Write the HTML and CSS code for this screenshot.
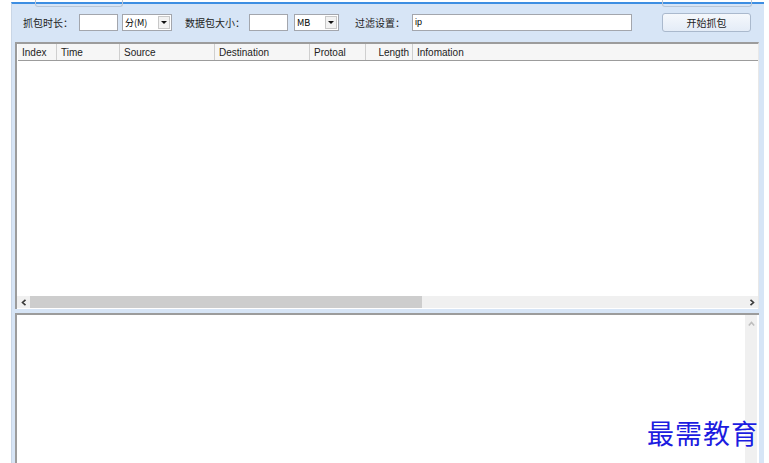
FILE: index.html
```html
<!DOCTYPE html>
<html lang="zh-CN">
<head>
  <meta charset="UTF-8">
  <title>抓包工具</title>
  <link rel="stylesheet" href="styles.css">
</head>
<body>

  <div class="window">
    <div class="tab-edge"></div>
    <div class="btn-edge"></div>

    <div class="toolbar">
      <span class="label lbl-time">抓包时长：</span>
      <div class="input w-time"></div>
      <div class="select w-unit">
        <span>分(M)</span>
        <i class="drop"></i>
      </div>
      <span class="label lbl-size">数据包大小：</span>
      <div class="input w-size"></div>
      <div class="select w-mb">
        <span>MB</span>
        <i class="drop"></i>
      </div>
      <span class="label lbl-filter">过滤设置：</span>
      <div class="input w-filter">ip</div>
      <button class="start">开始抓包</button>
    </div>

    <div class="list">
      <div class="head">
        <div class="col c-index">Index</div>
        <div class="col c-time">Time</div>
        <div class="col c-src">Source</div>
        <div class="col c-dst">Destination</div>
        <div class="col c-proto">Protoal</div>
        <div class="col c-len">Length</div>
        <div class="col c-info">Infomation</div>
      </div>
      <div class="rows"></div>
      <div class="hscroll">
        <span class="arrow">
          <svg width="6" height="7" viewBox="0 0 6 7"><path d="M4.5 0.8 L1.5 3.5 L4.5 6.2" fill="none" stroke="#3a3a3a" stroke-width="1.6"/></svg>
        </span>
        <div class="track"><div class="thumb"></div></div>
        <span class="arrow">
          <svg width="6" height="7" viewBox="0 0 6 7"><path d="M1.5 0.8 L4.5 3.5 L1.5 6.2" fill="none" stroke="#3a3a3a" stroke-width="1.6"/></svg>
        </span>
      </div>
    </div>

    <div class="detail">
      <div class="text"></div>
      <div class="vscroll">
        <svg class="up" width="7" height="6" viewBox="0 0 7 6"><path d="M0.8 4.5 L3.5 1.5 L6.2 4.5" fill="none" stroke="#bdbdbd" stroke-width="1.6"/></svg>
      </div>
    </div>
  </div>

  <div class="watermark">最需教育</div>

</body>
</html>
```

FILE: styles.css
```css
body {
  margin: 0;
  background: #fff;
  font-family: "Liberation Sans", "Noto Sans CJK SC", sans-serif;
  font-size: 10px;
  color: #000;
  height: 463px;
  overflow: hidden;
  position: relative;
}
.window {
  margin: 2px 0 0 11px;
  width: 753px;
  height: 461px;
  background: #d7e5f6;
  border-top: 2px solid #3d8ee2;
  border-left: 1px solid #c9d6e6;
  box-sizing: border-box;
  display: flex;
  flex-direction: column;
  position: relative;
}
.tab-edge {
  position: absolute;
  left: 23px;
  top: -4px;
  width: 86px;
  height: 6px;
  border: 1px solid #b9c6d6;
  border-top: none;
  border-radius: 0 0 3px 3px;
}
.btn-edge {
  position: absolute;
  left: 650px;
  top: -4px;
  width: 88px;
  height: 6px;
  border: 1px solid #b9c6d6;
  border-top: none;
  border-radius: 0 0 3px 3px;
}
.toolbar {
  display: flex;
  align-items: center;
  height: 19px;
  margin-top: 9px;
  padding-left: 11px;
}
.label {
  font-family: "Noto Sans CJK SC", sans-serif;
  font-size: 10px;
  color: #222;
  white-space: nowrap;
}
.lbl-time { width: 56px; }
.lbl-size { width: 64px; margin-left: 13px; }
.lbl-filter { width: 57px; margin-left: 16px; }
.input {
  height: 17px;
  background: #fff;
  border: 1px solid #a3a6ad;
  box-sizing: border-box;
  font-size: 9px;
  line-height: 15px;
  padding-left: 2px;
}
.w-time { width: 39px; }
.w-size { width: 39px; }
.w-filter { width: 220px; }
.select {
  height: 17px;
  background: #fff;
  border: 1px solid #a3a6ad;
  box-sizing: border-box;
  display: flex;
  align-items: center;
  justify-content: space-between;
  font-family: "Noto Sans CJK SC", sans-serif;
  font-size: 9px;
  padding-left: 2px;
}
.w-unit { width: 50px; margin-left: 4px; }
.w-mb { width: 45px; margin-left: 6px; }
.drop {
  width: 12px;
  height: 13px;
  margin-right: 1px;
  border: 1px solid #c8c8c8;
  box-sizing: border-box;
  background: #f2f2f2;
  position: relative;
}
.drop::after {
  content: "";
  position: absolute;
  left: 2px;
  top: 4px;
  border-left: 3px solid transparent;
  border-right: 3px solid transparent;
  border-top: 3px solid #111;
}
.start {
  width: 89px;
  height: 19px;
  margin-left: 30px;
  border: 1px solid #aab9cd;
  border-radius: 3px;
  background: linear-gradient(#f5f8fc, #e4ecf7);
  font-family: "Noto Sans CJK SC", sans-serif;
  font-size: 10px;
  color: #222;
  padding: 0;
}
.list {
  margin: 10px 0 0 3px;
  width: 744px;
  height: 267px;
  background: #fff;
  border-top: 2px solid #9c9c9c;
  border-left: 2px solid #9c9c9c;
  border-right: 1px solid #e8e8e8;
  box-sizing: border-box;
  display: flex;
  flex-direction: column;
}
.head {
  display: flex;
  height: 17px;
  margin-left: 1px;
  background: #f6f6f6;
  border-bottom: 1px solid #9c9c9c;
  box-sizing: border-box;
}
.col {
  line-height: 16px;
  padding: 1px 0 0 4px;
  border-right: 1px solid #cfcfcf;
  box-sizing: border-box;
  color: #222;
  white-space: nowrap;
}
.c-index { width: 39px; }
.c-time { width: 63px; }
.c-src { width: 95px; }
.c-dst { width: 95px; }
.c-proto { width: 56px; }
.c-len { width: 47px; text-align: right; padding-right: 3px; }
.c-info { flex: 1; border-right: none; }
.rows {
  flex: 1;
}
.hscroll {
  display: flex;
  align-items: center;
  height: 12px;
  background: #f0f0f0;
  margin-bottom: 1px;
}
.hscroll .arrow {
  width: 13px;
  height: 12px;
  display: flex;
  align-items: center;
  justify-content: center;
}
.track {
  flex: 1;
  height: 12px;
}
.thumb {
  width: 392px;
  height: 12px;
  background: #cdcdcd;
}
.detail {
  flex: 1;
  margin: 4px 0 0 3px;
  width: 744px;
  background: #fff;
  border-top: 2px solid #9c9c9c;
  border-left: 2px solid #9c9c9c;
  box-sizing: border-box;
  display: flex;
}
.text {
  flex: 1;
}
.vscroll {
  width: 12px;
  margin-right: 2px;
  background: #f0f0f0;
  display: flex;
  justify-content: center;
}
.vscroll .up {
  margin-top: 6px;
}
.watermark {
  position: absolute;
  left: 647px;
  top: 413px;
  font-family: "Noto Sans CJK SC", serif;
  font-size: 27px;
  letter-spacing: 1px;
  color: #1c1ce0;
  text-shadow: 0 0 2px #fff, 0 0 2px #fff;
}
```
